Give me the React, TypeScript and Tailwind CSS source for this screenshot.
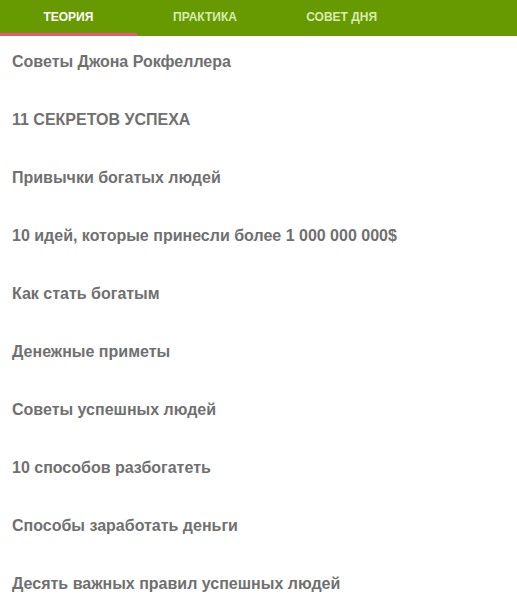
const tabs = ["Теория", "Практика", "Совет дня"];

const items = [
  "Советы Джона Рокфеллера",
  "11 СЕКРЕТОВ УСПЕХА",
  "Привычки богатых людей",
  "10 идей, которые принесли более 1 000 000 000$",
  "Как стать богатым",
  "Денежные приметы",
  "Советы успешных людей",
  "10 способов разбогатеть",
  "Способы заработать деньги",
  "Десять важных правил успешных людей",
];

const App = () => {
  return (
    <div className="min-h-screen bg-white font-['Liberation_Sans',Arial,sans-serif]">
      <div className="flex h-[36px] bg-[#679a00] pr-[107px]">
        {tabs.map((t, i) => (
          <div
            key={t}
            className={`flex-1 flex items-center justify-center text-[12px] font-bold uppercase border-b-[3px] ${
              i === 0 ? "text-white border-[#e8567a]" : "text-[#d8ebb0] border-transparent"
            }`}
          >
            {t}
          </div>
        ))}
      </div>

      <ul>
        {items.map((item) => (
          <li key={item} className="h-[58px] px-[12px] pt-[16px] text-[16px] font-bold text-[#707070] leading-[20px]">
            {item}
          </li>
        ))}
      </ul>
    </div>
  );
};

export default App;
